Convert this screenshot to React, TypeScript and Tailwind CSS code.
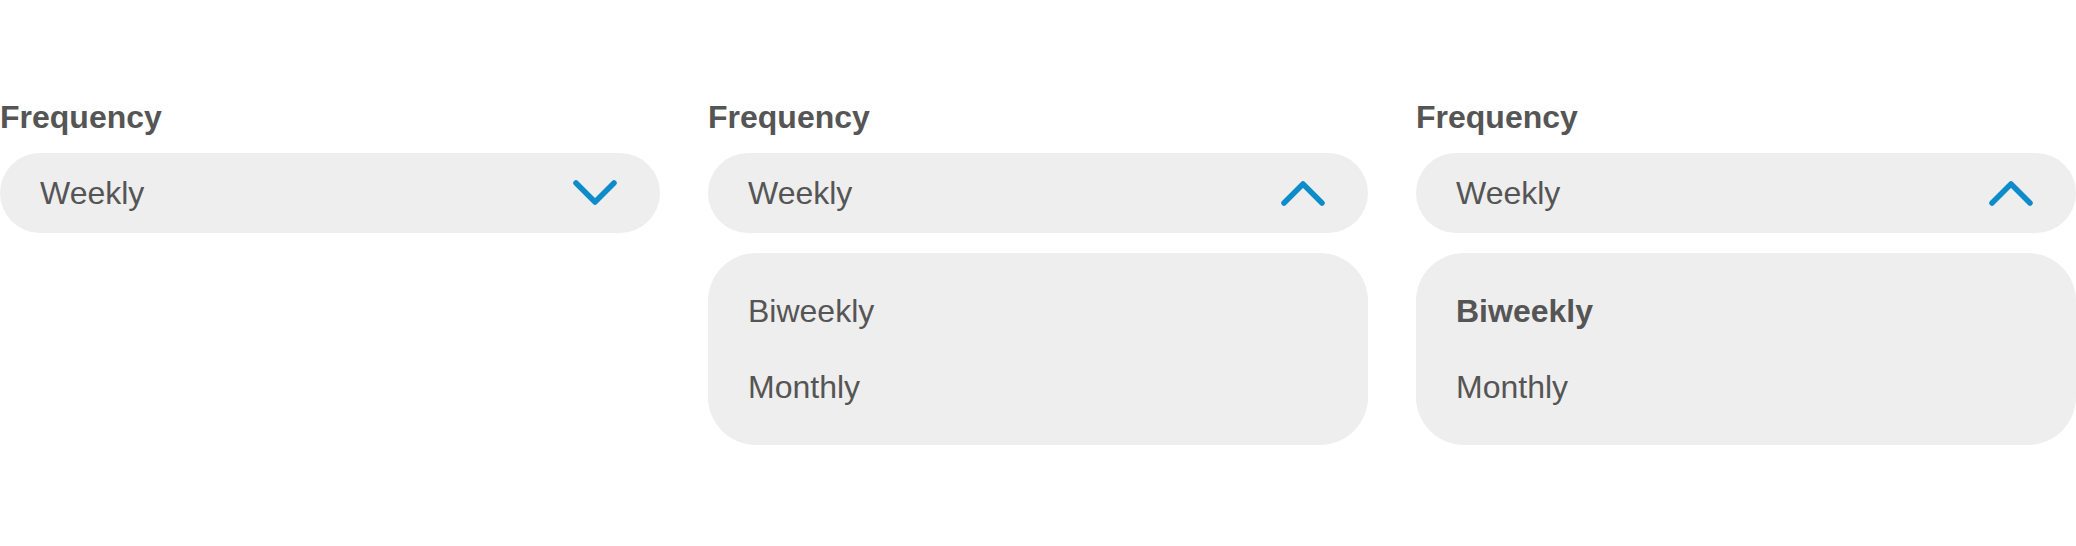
import React from 'react';

const font = { fontFamily: '"Liberation Sans", Arial, sans-serif' };

const Chevron: React.FC<{ up?: boolean }> = ({ up }) => (
  <svg width="46" height="28" viewBox="0 0 46 28" fill="none" className="shrink-0">
    <path
      d={up ? 'M4 24 L23 5 L42 24' : 'M4 4 L23 23 L42 4'}
      stroke="#0e8bc9"
      strokeWidth="5.5"
      strokeLinecap="round"
      strokeLinejoin="round"
    />
  </svg>
);

type Props = { open?: boolean; selected?: string };

const FrequencySelect: React.FC<Props> = ({ open, selected }) => {
  const options = ['Biweekly', 'Monthly'];
  return (
    <div className="flex flex-col">
      <label className="text-[32px] leading-[40px] font-bold text-[#555555] mb-4">Frequency</label>
      <div className="flex items-center justify-between h-[80px] rounded-full bg-[#eeeeee] pl-10 pr-[42px]">
        <span className="text-[32px] leading-[40px] text-[#555555]">Weekly</span>
        <Chevron up={open} />
      </div>
      {open && (
        <ul className="mt-5 rounded-[48px] bg-[#eeeeee] py-5 px-10">
          {options.map((o) => (
            <li
              key={o}
              className={`h-[76px] flex items-center text-[32px] leading-[40px] text-[#555555] ${
                o === selected ? 'font-bold' : 'font-normal'
              }`}
            >
              {o}
            </li>
          ))}
        </ul>
      )}
    </div>
  );
};

export default function App() {
  return (
    <div className="w-[2076px] h-[546px] bg-white pt-[97px]" style={font}>
      <div className="grid grid-cols-3 gap-12 items-start">
        <FrequencySelect />
        <FrequencySelect open />
        <FrequencySelect open selected="Biweekly" />
      </div>
    </div>
  );
}
